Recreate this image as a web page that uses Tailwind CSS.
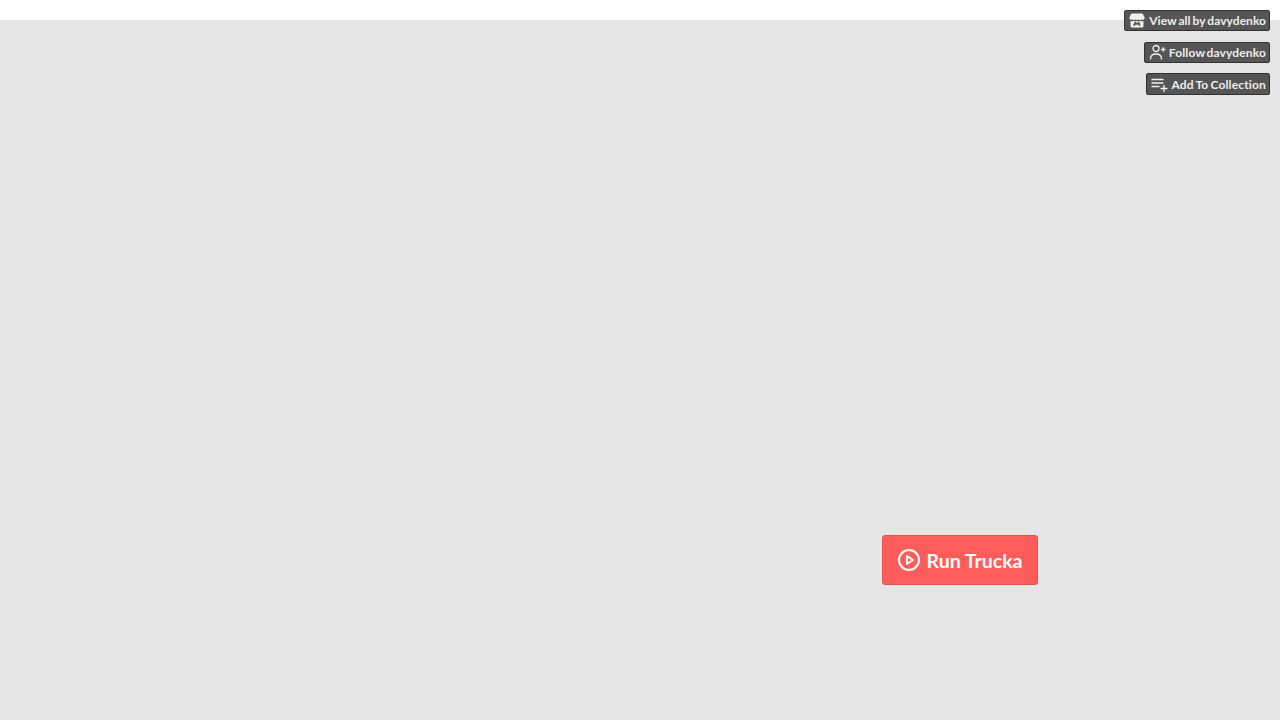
<!DOCTYPE html>
<html>
<head>
<meta charset="utf-8">
<script src="https://cdn.jsdelivr.net/npm/@tailwindcss/browser@4"></script>
</head>
<body class="bg-white font-['Lato',sans-serif]">
<div class="relative h-[720px] w-[1280px] overflow-hidden bg-white">
  <div class="h-5 bg-white"></div>
  <div class="relative h-[700px] bg-[#e5e5e5]">
    <div class="absolute left-[882px] top-[515px] flex h-[50px] w-[156px] items-center justify-center gap-[5px] rounded-[3px] border border-[#e55050] bg-[#ff5c5c] text-[19.5px] font-bold text-white">
      <svg class="h-[24px] w-[24px]" viewBox="0 0 24 24" fill="none" stroke="white" stroke-width="2" stroke-linecap="round" stroke-linejoin="round"><circle cx="12" cy="12" r="10"></circle><polygon points="10 8 16 12 10 16 10 8"></polygon></svg>
      <span class="pt-px">Run Trucka</span>
    </div>
  </div>
  <div class="absolute right-[10px] top-[10px] flex flex-col items-end gap-[10.5px] text-[12px] font-bold text-[#eeeeee]">
    <div class="flex h-[21px] items-center gap-[4px] rounded-[2px] border border-[#333] bg-[#555] pl-[4px] pr-[3px]">
      <svg class="h-[15px] w-[16px]" viewBox="0 0 16 15" fill="#f0f0f0"><path d="M2.500 .5h11l2 3.500v1.500a1.800 1.800 0 0 1-3 .7 2 2 0 0 1-3 0 2 2 0 0 1-3 0 2 2 0 0 1-3 0 1.800 1.800 0 0 1-3-.7V4z"></path><path d="M1.500 8c1 .6 2 .3 3-.3 1 .8 2 .8 3.500.3 1.500.5 2.500.5 3.500-.3 1 .6 2 .9 3 .3v5c0 1-1 1.500-2 1.500H3.500c-1 0-2-.5-2-1.500z"></path><path fill="#555" d="M5.500 9h1l1.500 1 1.500-1h1l1 3.500-1 .5-1.500-1.200h-2L5 13l-1-.5z"></path></svg>
      <span class="tracking-[0.05px] [word-spacing:-1px]">View all by davydenko</span>
    </div>
    <div class="flex h-[21px] items-center gap-[3px] rounded-[2px] border border-[#333] bg-[#555] pl-[4px] pr-[3px]">
      <svg class="h-[16px] w-[17px]" viewBox="0 0 17 16" fill="none" stroke="#f0f0f0" stroke-width="1.300" stroke-linecap="round"><circle cx="7" cy="4.500" r="3"></circle><path d="M1.500 15c0-3.500 2-5 5.500-5s5.500 1.500 5.500 5"></path><path d="M12.500 5.500h3.500M14.250 3.750v3.500"></path></svg>
      <span class="pt-[2px] tracking-[0.15px] [word-spacing:-1.600px]">Follow davydenko</span>
    </div>
    <div class="flex h-[22px] items-center gap-[3px] rounded-[2px] border border-[#333] bg-[#555] pl-[4px] pr-[3px]">
      <svg class="h-[16px] w-[17px]" viewBox="0 0 17 16" fill="none" stroke="#f0f0f0" stroke-width="1.300"><path d="M0.500 3.500h12M0.500 7h12M0.500 10.500h8M9.500 12.500h7M13 9v7"></path></svg>
      <span class="pt-[2px] tracking-[0.15px] [word-spacing:-1px]">Add To Collection</span>
    </div>
  </div>
</div>
</body>
</html>
